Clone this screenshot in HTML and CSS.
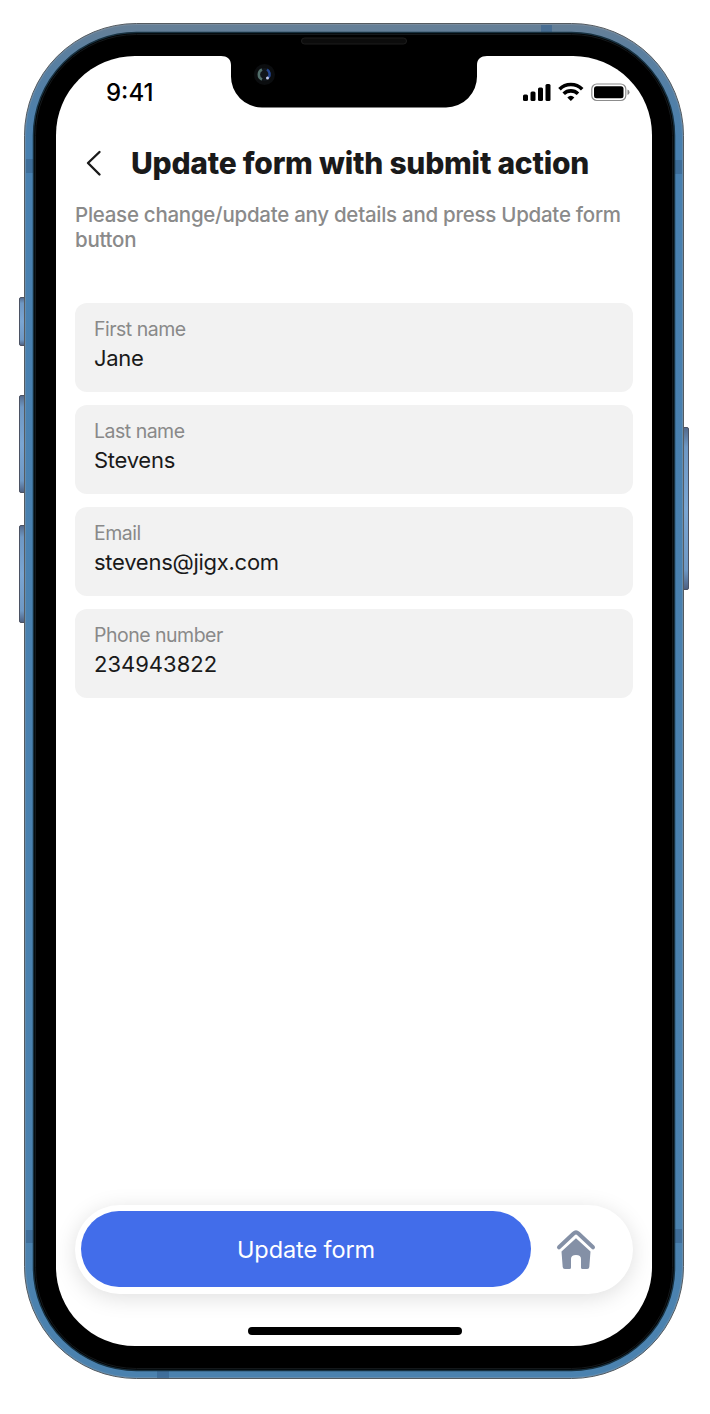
FILE: index.html
```html
<!DOCTYPE html>
<html lang="en">
<head>
<meta charset="utf-8">
<title>Update form with submit action</title>
<link rel="stylesheet" href="styles.css">
</head>
<body>
<div class="device">
  <svg class="hardware" width="710" height="1414" viewBox="0 0 710 1414" aria-hidden="true">
    <defs>
      <linearGradient id="metal" x1="0" y1="0" x2="0" y2="1">
        <stop offset="0" stop-color="#667f96"/>
        <stop offset=".02" stop-color="#5b7f9f"/>
        <stop offset=".09" stop-color="#4880b0"/>
        <stop offset="1" stop-color="#4b82af"/>
      </linearGradient>
      <linearGradient id="key" x1="0" y1="0" x2="0" y2="1">
        <stop offset="0" stop-color="#53698a"/>
        <stop offset=".12" stop-color="#6f98c4"/>
        <stop offset=".5" stop-color="#7ba6d3"/>
        <stop offset=".88" stop-color="#6f98c4"/>
        <stop offset="1" stop-color="#4d5f80"/>
      </linearGradient>
    </defs>
    <g fill="url(#key)" stroke="#4b5263">
      <rect x="19.5" y="297.5" width="7" height="48" rx="1.5"/>
      <rect x="19.5" y="395.5" width="7" height="97" rx="1.5"/>
      <rect x="19.5" y="525.5" width="7" height="97" rx="1.5"/>
      <rect x="681.5" y="427.500" width="7" height="162" rx="1.5"/>
    </g>
    <rect x="24.500" y="23.500" width="659" height="1355" rx="112" fill="url(#metal)" stroke="#555b60"/>
    <rect x="25.500" y="24.500" width="657" height="1353" rx="111" fill="none" stroke="#9aa3ab" stroke-opacity=".35"/>
    <g fill="#39648f" fill-opacity=".65">
      <rect x="26" y="159" width="7" height="14"/>
      <rect x="675" y="160" width="7" height="14"/>
      <rect x="541" y="25" width="11" height="7"/>
      <rect x="26" y="1230" width="7" height="13"/>
      <rect x="675" y="1229" width="7" height="14"/>
      <rect x="157" y="1371" width="12" height="7"/>
    </g>
    <rect x="33.500" y="32.500" width="641" height="1338" rx="103" fill="#000" stroke="#17303f" stroke-width="1.500"/>
    <rect x="35.500" y="34.500" width="637" height="1334" rx="101" fill="none" stroke="#14181b"/>
    <rect class="glass" x="56" y="56" width="596" height="1290" rx="79"/>
    <path d="M221 55V56C227 56 231 59 231 65V76A31 31 0 0 0 262 107.500H446A31 31 0 0 0 477 76V65C477 59 481 56 487 56V55Z"/>
    <rect x="301.500" y="38" width="105" height="6" rx="3" fill="#0c0c0c" stroke="#1d1d1d"/>
    <circle cx="264.500" cy="74.500" r="10.500" fill="#0b0d0f"/>
    <circle cx="264.500" cy="74.500" r="6.500" fill="#11161c"/>
    <path d="M262 69.500a5.500 5.500 0 0 0 0 10" fill="none" stroke="#526f6b" stroke-width="2.500"/>
    <path d="M267 69.500a5.500 5.500 0 0 1 1.500 8" fill="none" stroke="#234590" stroke-width="2.500"/>
    <circle cx="267.500" cy="78" r="1.500" fill="#c4cbed"/>
  </svg>
  <main class="screen">
    <div class="status">
      <span class="time">9:41</span>
      <svg width="108" height="20" viewBox="0 0 108 20" aria-label="Signal, Wi-Fi, battery">
        <g>
          <rect x="1" y="12.500" width="5" height="6.500" rx="1.500"/>
          <rect x="8.500" y="9.500" width="5" height="9.500" rx="1.500"/>
          <rect x="16" y="5.500" width="5" height="13.500" rx="1.500"/>
          <rect x="23.500" y="2" width="5" height="17" rx="1.500"/>
        </g>
        <g fill="none" stroke="#000" stroke-width="3.600">
          <path d="M37.500 7.200A16 16 0 0 1 60.200 7.200"/>
          <path d="M41.700 11.800A10.300 10.300 0 0 1 56 11.800"/>
        </g>
        <path d="M45.300 15.500Q48.850 12.200 52.400 15.500L48.850 19Z"/>
        <rect x="69.800" y="2" width="34" height="16.500" rx="5" fill="none" stroke="#8c8c8c" stroke-width="1.200"/>
        <rect x="72" y="4.200" width="29.500" height="12" rx="2.500"/>
        <path d="M105.500 7.500Q107.500 8.300 107.500 10.200T105.500 13Z" fill="#888"/>
      </svg>
    </div>
    <header class="bar">
      <svg class="back" width="18" height="28" viewBox="0 0 18 28" aria-label="Back"><path d="M14.500 3L3 14L14.500 25.500"/></svg>
      <h1>Update form with submit action</h1>
    </header>
    <p class="hint">Please change/update any details and press Update form button</p>
    <section class="fields">
      <div class="field"><span class="label">First name</span><span class="value">Jane</span></div>
      <div class="field"><span class="label">Last name</span><span class="value">Stevens</span></div>
      <div class="field"><span class="label">Email</span><span class="value">stevens@jigx.com</span></div>
      <div class="field"><span class="label">Phone number</span><span class="value phone">234943822</span></div>
    </section>
    <nav class="dock">
      <button class="submit">Update form</button>
      <svg class="home" width="40" height="42" viewBox="0 0 40 42" aria-label="Home">
        <path d="M3 19.300L17.600 5.500Q20 3.400 22.400 5.500L37 19.300" fill="none" stroke="#8490a6" stroke-width="4" stroke-linecap="round"/>
        <path d="M20 10.200L34.500 23.500L33.300 39Q33.100 41 31.200 41H26.500Q25 41 25 39.500V31Q25 27 20 27T15 31V39.500Q15 41 13.500 41H8.800Q6.900 41 6.700 39L5.500 23.500Z" fill="#8490a6"/>
      </svg>
    </nav>
    <div class="indicator"></div>
  </main>
</div>
</body>
</html>
```

FILE: styles.css
```css
* { box-sizing: border-box; }

body {
  margin: 0;
  background: #fff;
  font-family: Inter, "Liberation Sans", sans-serif;
  color: #1a1a1a;
}

.device {
  position: relative;
  width: 710px;
  height: 1414px;
  padding: 56px 58px 68px 56px;
}

.hardware {
  position: absolute;
  inset: 0;
}

.glass { fill: #fff; }

.screen {
  position: relative;
  display: flex;
  flex-direction: column;
  height: 1290px;
  padding: 0 19px 11px;
}

.status {
  display: flex;
  justify-content: space-between;
  align-items: center;
  height: 72px;
  padding: 0 3px 0 31px;
}

.time {
  padding-top: 1px;
  font-size: 24px;
  font-weight: 550;
  line-height: 28px;
  color: #000;
}

.bar {
  display: flex;
  align-items: center;
  gap: 28px;
  height: 70px;
  padding-left: 10px;
}

.back path {
  fill: none;
  stroke: #1a1a1a;
  stroke-width: 2.4;
  stroke-linecap: round;
  stroke-linejoin: round;
}

h1 {
  margin: 0;
  font-size: 30px;
  font-weight: 800;
  line-height: 36px;
  letter-spacing: -0.24px;
  white-space: nowrap;
}

.hint {
  margin: 4px 0 0;
  font-size: 20.5px;
  font-weight: 450;
  line-height: 25px;
  letter-spacing: -0.27px;
  color: #8a8a8a;
}

.fields {
  display: flex;
  flex-direction: column;
  gap: 13px;
  margin-top: 51px;
}

.field {
  display: flex;
  flex-direction: column;
  height: 89px;
  padding: 14px 19px;
  border-radius: 12px;
  background: #f2f2f2;
}

.label {
  font-size: 19.5px;
  font-weight: 430;
  line-height: 24px;
  letter-spacing: -0.5px;
  color: #898989;
}

.value {
  margin-top: 3px;
  font-size: 22px;
  line-height: 28px;
  letter-spacing: -0.27px;
}

.phone { letter-spacing: 0; }

.dock {
  display: flex;
  align-items: center;
  width: 558px;
  height: 89px;
  margin-top: auto;
  padding: 5px 6px 7px;
  border-radius: 45px;
  background: #fff;
  box-shadow: 0 4px 22px rgba(0, 0, 0, 0.13);
}

.submit {
  width: 450px;
  height: 76px;
  padding: 2px 0 0;
  border: 0;
  border-radius: 38px;
  background: #426dea;
  color: #fff;
  font: 400 23.5px/28px Inter, "Liberation Sans", sans-serif;
  letter-spacing: -0.1px;
}

.home { margin-left: 25px; }

.indicator {
  width: 214px;
  height: 8px;
  margin: 33px auto 0 173px;
  border-radius: 4px;
  background: #000;
}
```
